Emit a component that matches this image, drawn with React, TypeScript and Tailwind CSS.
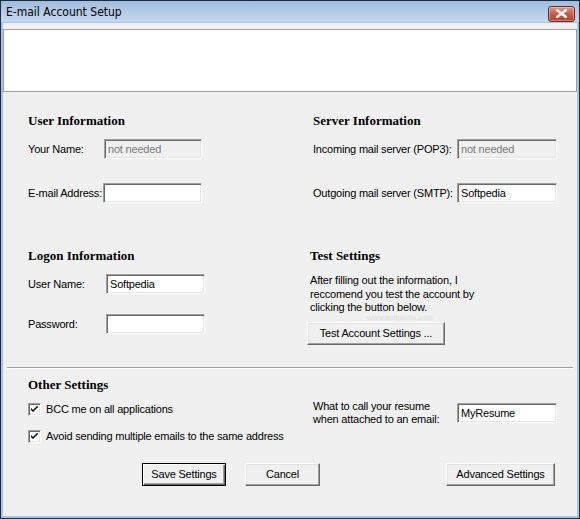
import React from "react";

const ui = { fontFamily: '"Liberation Sans", Arial, sans-serif' };
const serif = { fontFamily: '"Liberation Serif", "Times New Roman", serif' };

function Heading({ children, className = "" }: { children: React.ReactNode; className?: string }) {
  return (
    <div className={`h-[16px] leading-[16px] text-[13px] font-bold text-black tracking-normal ${className}`} style={serif}>
      {children}
    </div>
  );
}

function Label({ children, w }: { children: React.ReactNode; w: string }) {
  return <span className={`${w} shrink-0 whitespace-nowrap`}>{children}</span>;
}

function Input({ value = "", disabled = false, w }: { value?: string; disabled?: boolean; w: string }) {
  return (
    <div
      className={`${w} shrink-0 h-[20px] border border-t-[#a0a0a0] border-l-[#a0a0a0] border-b-white border-r-white shadow-[inset_1px_1px_0_#696969,inset_-1px_-1px_0_#e3e3e3] flex items-center pl-[3px] text-[11px] whitespace-nowrap ${
        disabled ? "bg-[#f0f0f0] text-[#7a7a7a]" : "bg-white text-black"
      }`}
    >
      {value}
    </div>
  );
}

function Button({ children, w, isDefault = false }: { children: React.ReactNode; w: string; isDefault?: boolean }) {
  return (
    <div
      className={`${w} h-[23px] flex items-center justify-center text-[11px] text-black bg-[#f0f0f0] whitespace-nowrap ${
        isDefault
          ? "border border-[#000] shadow-[inset_1px_1px_0_#fff,inset_-1px_-1px_0_#696969,inset_-2px_-2px_0_#a0a0a0]"
          : "border border-t-white border-l-white border-b-[#696969] border-r-[#696969] shadow-[inset_-1px_-1px_0_#a0a0a0,inset_1px_1px_0_#e3e3e3]"
      }`}
    >
      {children}
    </div>
  );
}

function Checkbox() {
  return (
    <div className="w-[13px] h-[13px] shrink-0 bg-white border border-t-[#a0a0a0] border-l-[#a0a0a0] border-b-white border-r-white shadow-[inset_1px_1px_0_#696969,inset_-1px_-1px_0_#e3e3e3] flex items-center justify-center">
      <svg width="7" height="7" viewBox="0 0 7 7">
        <path d="M0 2 L0 4 L2 6 L7 1 L7 -1 L2 4 Z" fill="#000" />
      </svg>
    </div>
  );
}

export default function App() {
  return (
    <div className="w-[580px] h-[519px] bg-[#a9c4e2] border border-[#1c2b40] flex flex-col overflow-hidden tracking-[-0.2px]" style={ui}>
      {/* Title bar */}
      <div className="h-[21px] shrink-0 flex items-center justify-between bg-gradient-to-b from-[#a1bddc] to-[#c5d9ee] pl-[5px] pr-[4px]">
        <span className="text-[12px] text-black tracking-normal" style={{ fontFamily: '"DejaVu Sans Condensed", "Liberation Sans", sans-serif' }}>
          E-mail Account Setup
        </span>
        <div className="w-[27px] h-[16px] mt-[4px] rounded-[3px] border border-[#6b2a22] bg-gradient-to-b from-[#e0998c] via-[#c85a48] to-[#b8412f] flex items-center justify-center shadow-[inset_0_0_0_1px_rgba(255,255,255,0.35)]">
          <svg width="11" height="9" viewBox="0 0 11 9">
            <path d="M1 1 L10 8 M10 1 L1 8" stroke="#ffffff" strokeWidth="2.4" strokeLinecap="square" />
          </svg>
        </div>
      </div>

      {/* Client area */}
      <div className="flex-1 mx-[2px] mb-[2px] mt-[1px] bg-[#f0f0f0] flex flex-col relative">
        {/* white banner */}
        <div className="mt-[6px] h-[63px] bg-white border border-[#a0a0a0]" />

        {/* Top section */}
        <div className="h-[275px] flex pl-[25px]">
          {/* left column */}
          <div className="w-[285px] flex flex-col">
            <Heading className="mt-[21px]">User Information</Heading>
            <div className="mt-[10px] flex items-center h-[20px] text-[11px]">
              <Label w="w-[76px]">Your Name:</Label>
              <Input w="w-[98px]" value="not needed" disabled />
            </div>
            <div className="mt-[24px] flex items-center h-[20px] text-[11px]">
              <Label w="w-[75px]">E-mail Address:</Label>
              <Input w="w-[99px]" />
            </div>
            <Heading className="mt-[45px]">Logon Information</Heading>
            <div className="mt-[10px] flex items-center h-[20px] text-[11px]">
              <Label w="w-[78px]">User Name:</Label>
              <Input w="w-[99px]" value="Softpedia" />
            </div>
            <div className="mt-[20px] flex items-center h-[20px] text-[11px]">
              <Label w="w-[78px]">Password:</Label>
              <Input w="w-[99px]" />
            </div>
          </div>
          {/* right column */}
          <div className="flex-1 flex flex-col">
            <Heading className="mt-[21px]">Server Information</Heading>
            <div className="mt-[10px] flex items-center h-[20px] text-[11px]">
              <Label w="w-[144px]">Incoming mail server (POP3):</Label>
              <Input w="w-[100px]" value="not needed" disabled />
            </div>
            <div className="mt-[24px] flex items-center h-[20px] text-[11px]">
              <Label w="w-[144px]">Outgoing mail server (SMTP):</Label>
              <Input w="w-[100px]" value="Softpedia" />
            </div>
            <div className="ml-[-3px] flex flex-col">
              <Heading className="mt-[45px]">Test Settings</Heading>
              <p className="mt-[10px] text-[11px] leading-[13.5px] text-black whitespace-nowrap">
                After filling out the information, I
                <br />
                reccomend you test the account by
                <br />
                clicking the button below.
              </p>
              <div className="mt-[7px] ml-[-3px]">
                <Button w="w-[138px]">Test Account Settings ...</Button>
              </div>
            </div>
          </div>
        </div>

        {/* separator */}
        <div className="mx-[4px] h-[2px] border-t border-[#a0a0a0] border-b border-b-white" />

        {/* Bottom section */}
        <div className="flex pl-[25px]">
          <div className="w-[285px] flex flex-col">
            <Heading className="mt-[8px]">Other Settings</Heading>
            <div className="mt-[10px] flex items-center gap-[5px] text-[11px] h-[13px]">
              <Checkbox />
              <span className="whitespace-nowrap">BCC me on all applications</span>
            </div>
            <div className="mt-[14px] flex items-center gap-[5px] text-[11px] h-[13px]">
              <Checkbox />
              <span className="whitespace-nowrap">Avoid sending multiple emails to the same address</span>
            </div>
          </div>
          <div className="flex-1 flex flex-col">
            <div className="mt-[34px] flex items-center h-[20px] text-[11px]">
              <span className="w-[144px] shrink-0 leading-[13px] whitespace-nowrap">
                What to call your resume
                <br />
                when attached to an email:
              </span>
              <Input w="w-[100px]" value="MyResume" />
            </div>
          </div>
        </div>

        {/* Buttons */}
        <div className="mt-[20px] flex pl-[139px]">
          <Button w="w-[84px]" isDefault>
            Save Settings
          </Button>
          <div className="ml-[19px]">
            <Button w="w-[75px]">Cancel</Button>
          </div>
          <div className="ml-[126px]">
            <Button w="w-[109px]">Advanced Settings</Button>
          </div>
        </div>

        {/* watermark */}
        <div className="absolute left-[364px] top-[291px] text-[8px] leading-[8px] text-[#dedede] pointer-events-none select-none">
          www.softpedia.com
        </div>
      </div>
    </div>
  );
}
